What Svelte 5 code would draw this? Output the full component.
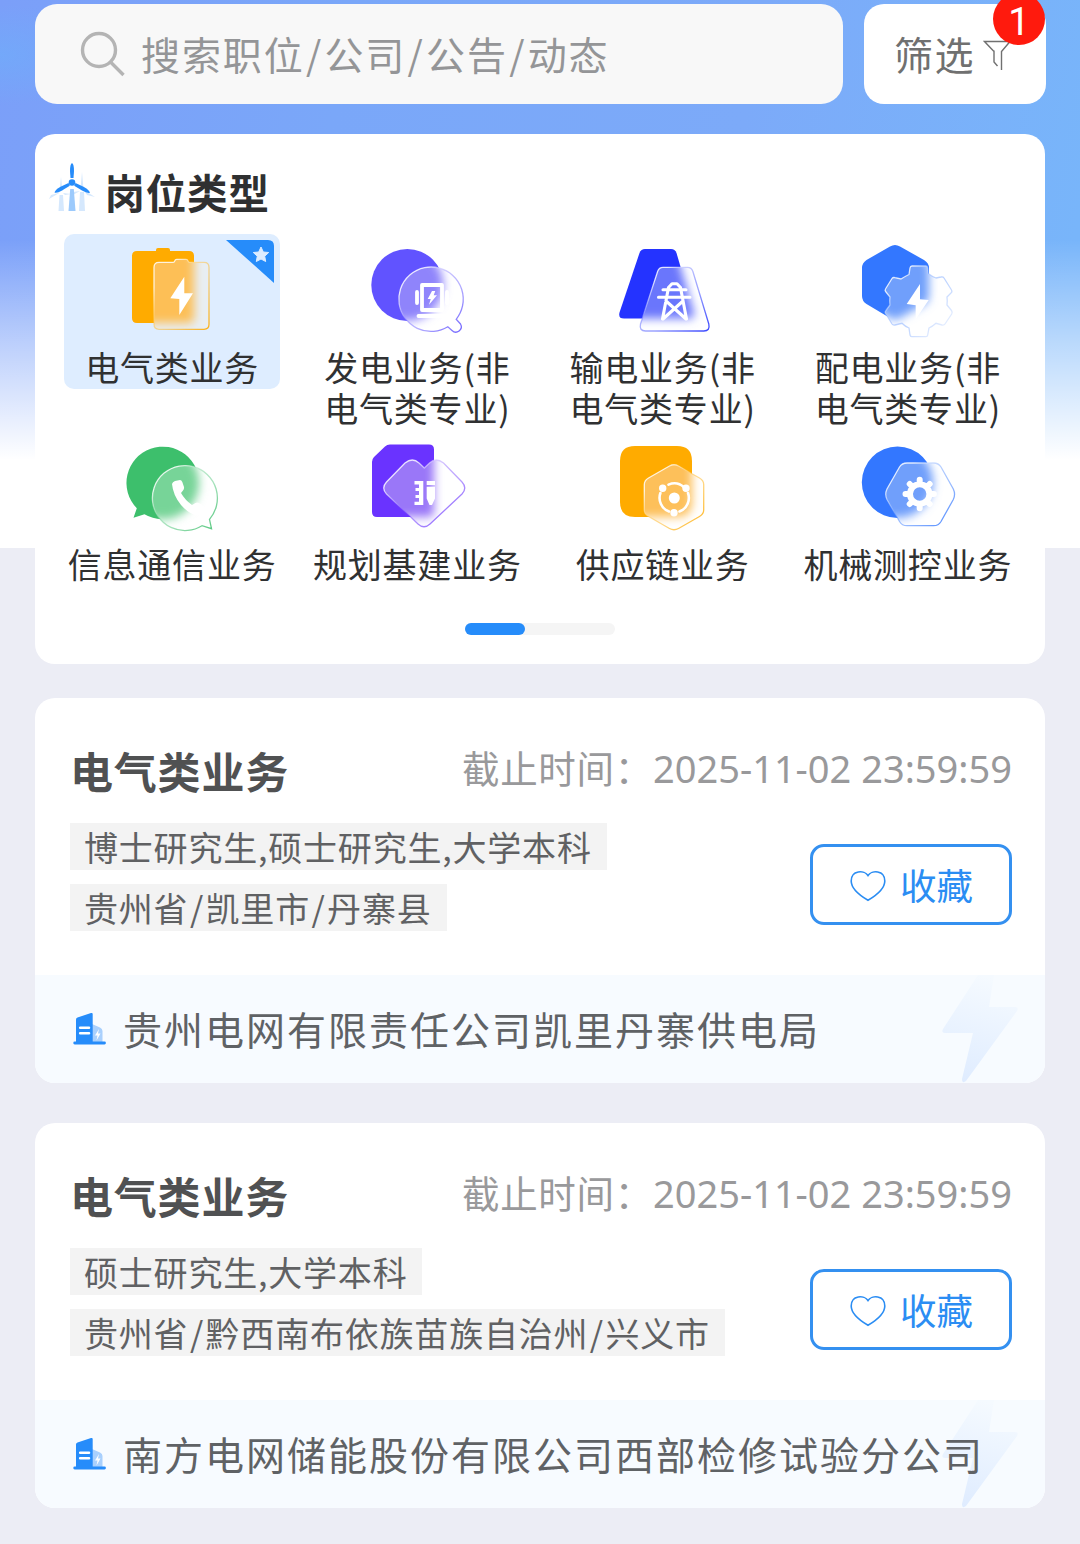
<script>
    const categories = [
        {
            label: '电气类业务',
            selected: true,
            color: '#ffab00',
            soft: '#fdbf57',
            back: 'M20 11H39V10q0-2 2-2H51q2 0 2 2V11H72q5 0 5 5V78q0 5-5 5H20q-5 0-5-5V16q0-5 5-5Z',
            front: 'M42 22.300H56q1.500 0 1.800-1.500 0.300-1.500 2-1.500H69q1.700 0 2 1.500 0.300 1.500 1.800 1.500H87q5 0 5 5V84.300q0 5-5 5H42q-5 0-5-5V27.300q0-5 5-5Z',
            fill: 'M67.300 36.700L53.300 58.300L62.300 59V75L76 53.300H67.300Z'
        },
        {
            label: '发电业务(非电气类专业)',
            color: '#6153ff',
            soft: '#8f84fb',
            back: 'M45.300 9a36 36 0 1 1 0 72a36 36 0 1 1 0-72Z',
            front: 'M94.200 79.300L98.500 84a5.400 5.400 0 0 1-8.500 6.500L85.800 86.700A32.200 32.200 0 1 1 94.200 79.300Z',
            fill: 'M70 51L65.700 59H68.700L67 64.700L75 55.300H71.700L73.300 51Z',
            stroke: 'M60 45H80V70H60ZM55 52V63M85 52V63M56.500 76H84',
            width: 3.8
        },
        {
            label: '输电业务(非电气类专业)',
            color: '#2433ff',
            soft: '#6b76fc',
            back: 'M37 9H63q4 0 5.500 4L86 73q1 5.500-4.500 5.500H16q-6 0-4.500-6L31.500 13q1.500-4 5.500-4Z',
            front: 'M55 27.300H79.500q4 0 5.300 4L100.800 84q1.500 7-5 7H37.500q-6.500 0-5-7L49.700 31.300q1.300-4 5.300-4Z',
            stroke: 'M54.500 79L60.500 47.500L64 43.800H69L72.500 47.500L78.500 79M55 49.700H78M50.500 57.300H82M58 61L78 79M75 61L55 79',
            width: 3.1
        },
        {
            label: '配电业务(非电气类专业)',
            color: '#3377ff',
            soft: '#6f9ffb',
            back: 'M37 6.500Q42 3.500 47 6.500L71 20Q76 23 76 28V56Q76 61 71.500 64L47 78Q42 81 37 78L13.500 64Q9 61 9 56V28Q9 23 13.500 20Z',
            front: 'M59 26H73Q74.500 26 74.700 28L75.300 33.500Q79 36.500 83 38L88 37Q90 36.500 91 38L98.500 50Q99.500 52 98 53L94 57Q94.500 61 94 65L98.500 70.500Q99.700 72 98.700 74L92 84Q91 85.500 89 85L83 83.300Q79.500 86.500 76 88L74.700 95Q74.500 96.700 73 96.700H59Q57.500 96.700 57 95L56 88Q52 86.500 49 83.300L42 85Q40 85.500 39 84L32.500 73.500Q31.500 72 33 70.500L37 65Q36.500 61 37 57L33 52Q31.500 50.500 32.500 49L39 38.500Q40 37 42 37.700L48 39Q52 36.500 56 34.500L57 28Q57.300 26 59 26Z',
            fill: 'M67 44L53.700 64L62.700 65.300V79.300L75.700 60L67 59.300Z',
            fade: true
        },
        {
            label: '信息通信业务',
            color: '#3dbf6c',
            soft: '#77d498',
            back: 'M19.800 71.300L16.500 80.700L27.500 77.300A36.300 36.300 0 1 0 19.800 71.300Z',
            front: 'M92.500 82.300L94.500 91.700L85 88.700A32.500 32.500 0 1 1 92.500 82.300Z',
            fill: 'M55 47Q55.500 45 58 44L63 43Q64.500 43 65.300 45L67 50Q67.300 52 66 53.500L64 56Q68 63 75 68L78.500 66Q80 65 82 66L87 69Q88 70 87.500 72L85 77Q84 79 80 78.500Q72 77 64 68Q56 58 55 47Z'
        },
        {
            label: '规划基建业务',
            color: '#6a33ff',
            soft: '#9a77f8',
            back: 'M28 7.500H67q5 0 5 5V75q0 5-5 5H15q-5 0-5-5V25Q10 22 12 20L23 9.500Q25 7.500 28 7.500Z',
            front: 'M43 26Q50.500 20 57 26L62.300 31L67.600 26Q74 20 81.500 26L100 45Q105.500 51 100 57L68 87Q62 92.500 56 87L24.500 57Q19 51 24.500 45Z',
            fill: 'M52.500 44H61.300V68H52.500V64.700H57V61H53.500V58H57V54H53.500V51H57V47.500H52.500ZM64.700 44H73V48H64.700ZM64.700 49.700H73V61.500L70 68H67.500L64.700 61.500Z'
        },
        {
            label: '供应链业务',
            color: '#ffab00',
            soft: '#fdc05a',
            back: 'M27 9H69q15 0 15 15V65q0 15-15 15H27q-15 0-15-15V24q0-15 15-15Z',
            front: 'M61.500 29Q66 26.500 70.500 29L91.500 41Q95.700 43.500 95.700 47.500V73Q95.700 77 91.500 79.500L70.500 91.500Q66 94 61.500 91.500L40.500 79.500Q36.300 77 36.300 73V47.500Q36.300 43.500 40.500 41Z',
            fill: 'M60.800 61a5.500 5.500 0 1 1 11 0a5.500 5.500 0 1 1-11 0ZM51 51.300a3.700 3.700 0 1 1 7.400 0a3.700 3.700 0 1 1-7.400 0ZM74.300 51.300a3.700 3.700 0 1 1 7.400 0a3.700 3.700 0 1 1-7.400 0ZM62.300 75.700a3.700 3.700 0 1 1 7.400 0a3.700 3.700 0 1 1-7.400 0Z',
            stroke: 'M60.500 47.600A14.600 14.600 0 0 1 76 50.200M52.400 56A14.600 14.600 0 0 0 61 74.500M80 56A14.600 14.600 0 0 1 71.500 74.500',
            width: 2.6
        },
        {
            label: '机械测控业务',
            color: '#3377ff',
            soft: '#6f9ffb',
            back: 'M44.500 9.600a35.700 35.700 0 1 1 0 71.400a35.700 35.700 0 1 1 0-71.400Z',
            front: 'M54 26H80.500Q85.500 26 88 30L100.300 52Q102.800 57.300 100.300 62.500L88 84.500Q85.500 88.700 80.500 88.700H54Q49 88.700 46.500 84.500L34 62.500Q31.500 57.300 34 52L46.500 30Q49 26 54 26Z',
            stroke: 'M57 57a9.700 9.700 0 1 1 19.400 0a9.700 9.700 0 1 1-19.400 0ZM66.700 42.800v3M66.700 68.200v3M52.500 57h3M77.900 57h3M56.700 47l2 2M76.700 47l-2 2M56.700 67l2-2M76.700 67l-2-2',
            width: 6
        }
    ];

    const jobs = [
        {
            title: '电气类业务',
            deadline: '2025-11-02 23:59:59',
            tags: ['博士研究生,硕士研究生,大学本科', '贵州省/凯里市/丹寨县'],
            company: '贵州电网有限责任公司凯里丹寨供电局'
        },
        {
            title: '电气类业务',
            deadline: '2025-11-02 23:59:59',
            tags: ['硕士研究生,大学本科', '贵州省/黔西南布依族苗族自治州/兴义市'],
            company: '南方电网储能股份有限公司西部检修试验分公司'
        }
    ];
</script>

{#snippet slashed(text)}
    {#each text.split('/') as part, n}{#if n}<i class="slash">/</i>{/if}{part}{/each}
{/snippet}

<div class="page">
    <div class="search-row">
        <div class="search-box">
            <svg class="search-icon" viewBox="0 0 46 46">
                <circle cx="19" cy="19" r="16.500" />
                <path d="M30.500 31L43.500 44" />
            </svg>
            <span>{@render slashed('搜索职位/公司/公告/动态')}</span>
        </div>
        <div class="filter-box">
            <span>筛选</span>
            <svg class="filter-icon" viewBox="0 0 28 32">
                <path d="M11 10.500V22L14.500 26M11 11.500L1.500 1.500H27L18.500 11.500V30" />
            </svg>
            <b class="badge">1</b>
        </div>
    </div>

    <section class="types">
        <h2>
            <svg class="turbine" viewBox="0 0 48 50">
                <g fill="#d5e8fd">
                    <path d="M10.500 32H14L15 48H9.500Z" />
                    <path d="M31 29H35L36 48H30Z" />
                    <path d="M12 14l1.500 14h-3zM11 29.500L0 36l2-4zM14 30l8 1-6 1zM33 9l1.500 17h-3zM35 27l11 7-8-2zM31 28l-9 5 2-4z" />
                </g>
                <path fill="#9ccafc" d="M21.200 26H24.800L26.500 48H19.500Z" />
                <g fill="#268cfa">
                    <circle cx="23" cy="19.500" r="3.300" />
                    <path d="M23 0Q25 1 25 8L24.500 15H21.500L21 8Q21 1 23 0Z" />
                    <path d="M19.500 20L20.800 22.700L13 27.500Q8 30.500 5.500 29.500Q6 27 11.500 23.800Z" />
                    <path d="M26.500 20L25.200 22.700L33 27.500Q38 30.500 41 29.800Q40 27 34.500 23.800Z" />
                </g>
            </svg>
            岗位类型
        </h2>
        <div class="grid">
            {#each categories as item, i}
                <div class="cell" class:selected={item.selected}>
                    {#if item.selected}
                        <svg class="corner" viewBox="0 0 50 44">
                            <path fill="#268cfa" d="M1 0H43Q49 0 49 6V43Z" />
                            <path fill="#dcecff" stroke="#dcecff" stroke-linejoin="round" d="M36 7L38.300 12L43.700 12.500L39.700 16.200L40.700 21.500L36 19L31.300 21.500L32.300 16.200L28.300 12.500L33.700 12Z" />
                        </svg>
                    {/if}
                    <svg class="cell-icon" viewBox="0 0 110 100">
                        <defs>
                            <clipPath id="clip{i}"><path d={item.front} /></clipPath>
                            <filter id="soft{i}" x="-20%" y="-20%" width="140%" height="140%">
                                <feGaussianBlur stdDeviation="5" />
                            </filter>
                            <linearGradient id="edge{i}" x1="0" y1="0" x2="1" y2="1">
                                <stop offset="0.200" stop-color="#fff" stop-opacity="0.800" />
                                <stop offset="0.600" stop-color={item.color} stop-opacity={item.fade ? 0.3 : 0.45} />
                                <stop offset="1" stop-color={item.color} stop-opacity={item.fade ? 0.05 : 0.9} />
                            </linearGradient>
                        </defs>
                        <path d={item.back} fill={item.color} />
                        <g clip-path="url(#clip{i})">
                            <path d={item.front} fill={item.selected ? '#e8eef3' : '#fff'} />
                            <path d={item.back} fill={item.soft} filter="url(#soft{i})" />
                        </g>
                        <path d={item.front} fill="none" stroke="url(#edge{i})" stroke-width="1.300" />
                        {#if item.fill}
                            <path d={item.fill} fill="#fff" />
                        {/if}
                        {#if item.stroke}
                            <path d={item.stroke} fill="none" stroke="#fff" stroke-width={item.width} stroke-linecap="round" stroke-linejoin="round" />
                        {/if}
                    </svg>
                    <p>{item.label}</p>
                </div>
            {/each}
        </div>
        <div class="pager"><i></i></div>
    </section>

    {#each jobs as job, i}
        <article class="job">
            <div class="job-head">
                <h3>{job.title}</h3>
                <span class="deadline">截止时间：<em>{job.deadline}</em></span>
            </div>
            <div class="job-body">
                <div class="tags">
                    {#each job.tags as tag}
                        <span>{@render slashed(tag)}</span>
                    {/each}
                </div>
                <button>
                    <svg class="heart" viewBox="0 0 36 32">
                        <path d="M18 5.500C14.500 0 1.200-0.300 1.200 11C1.200 18.500 9 25 18 30.300C27 25 34.800 18.500 34.800 11C34.800-0.300 21.500 0 18 5.500Z" />
                    </svg>
                    收藏
                </button>
            </div>
            <div class="job-foot">
                <svg class="bolt" viewBox="0 0 80 108">
                    <defs>
                        <linearGradient id="bolt{i}" x1="0.500" y1="0" x2="0.300" y2="1">
                            <stop offset="0" stop-color="#f5faff" />
                            <stop offset="1" stop-color="#dfecff" />
                        </linearGradient>
                    </defs>
                    <path fill="url(#bolt{i})" d="M38 0H54L49 32H75Q79 32 77 36L26 106Q22 109 22 104L33 58H5Q1 58 3 54Z" />
                </svg>
                <svg class="building" viewBox="0 0 34 34">
                    <path fill="#a9d0fd" d="M19 12L27 15.500Q29.500 16.500 29.500 19V31H19Z" />
                    <path fill="#fff" d="M26 17L22 23.500H24.500L23.500 28.500L27.500 21.500H25Z" />
                    <path fill="#268cfa" d="M3 7.500Q3 6 4.500 5.400L18 1Q19.700 0.500 19.700 2V30H3Z" />
                    <path fill="none" stroke="#268cfa" stroke-width="2.800" stroke-linecap="round" d="M1.700 31H31.500" />
                    <path fill="none" stroke="#fff" stroke-width="2.600" stroke-linecap="round" d="M7.200 15.700H16M7.200 21.200H16" />
                </svg>
                <span>{job.company}</span>
            </div>
        </article>
    {/each}
</div>

<style>
    :global(body) {
        background: #ecedf5;
    }

    .page {
        box-sizing: border-box;
        height: 1544px;
        padding: 4px 35px 0;
        overflow: hidden;
        font-family: 'Noto Sans CJK SC', 'Noto Sans', sans-serif;
        background:
            linear-gradient(180deg, rgba(255, 255, 255, 0) 240px, rgba(255, 255, 255, 0.5) 345px, #fff 460px) 0 0 / 100% 548px no-repeat,
            radial-gradient(ellipse 110px 50px at 0 55px, rgba(112, 172, 250, 0.7), rgba(112, 172, 250, 0)) 0 0 / 100% 548px no-repeat,
            linear-gradient(100deg, #7b9ff9 0%, #7aa7f9 30%, #7caaf9 65%, #78b5fa 95%) 0 0 / 100% 548px no-repeat,
            #ecedf5;
    }

    .slash {
        margin: 0 1.3px;
        font-style: normal;
    }

    .search-row {
        display: flex;
        gap: 21px;
        height: 100px;
        margin-right: -1px;
    }

    .search-box {
        box-sizing: border-box;
        display: flex;
        align-items: center;
        width: 808px;
        padding-left: 45px;
        border-radius: 22px;
        background: #f8f8f8;
        color: #949597;
        font-size: 39px;
        letter-spacing: 1.9px;
    }

    .search-box span,
    .filter-box span {
        margin-top: -2px;
    }

    .search-icon {
        width: 46px;
        height: 46px;
        margin-right: 15px;
        fill: none;
        stroke: #b4b4b4;
        stroke-width: 3.4;
    }

    .filter-box {
        position: relative;
        box-sizing: border-box;
        display: flex;
        align-items: center;
        width: 182px;
        padding-left: 30px;
        border-radius: 20px;
        background: #fff;
        color: #707070;
        font-size: 39px;
        letter-spacing: 1.5px;
    }

    .filter-icon {
        width: 28px;
        height: 32px;
        margin: 3px 0 0 8px;
        fill: none;
        stroke: #707070;
        stroke-width: 1.4;
    }

    .badge {
        position: absolute;
        top: -11px;
        right: 1px;
        box-sizing: border-box;
        width: 52px;
        height: 52px;
        padding-top: 11px;
        border-radius: 50%;
        background: #ff1a0d;
        color: #fff;
        font: 400 38px/36px Roboto, sans-serif;
        letter-spacing: 0;
        text-align: center;
    }

    .types {
        box-sizing: border-box;
        height: 530px;
        margin-top: 30px;
        padding: 29px 14.5px 0;
        border-radius: 20px;
        background: #fff;
    }

    h2 {
        display: flex;
        align-items: center;
        height: 57px;
        margin: 0;
        color: #2f3031;
        font-size: 40.5px;
        font-weight: 700;
        letter-spacing: 0.8px;
    }

    .turbine {
        align-self: flex-start;
        width: 48px;
        height: 50px;
        margin: 0 8px 0 -1px;
    }

    .grid {
        display: grid;
        grid-template-columns: repeat(4, 1fr);
        grid-auto-rows: 197px;
        justify-items: center;
        align-items: start;
        margin-top: 14px;
    }

    .cell {
        position: relative;
        display: flex;
        flex-direction: column;
        align-items: center;
        width: 216px;
        height: 155px;
        border-radius: 10px;
    }

    .cell.selected {
        background: #deedff;
    }

    .corner {
        position: absolute;
        top: 6px;
        right: 5px;
        width: 50px;
        height: 44px;
    }

    .cell-icon {
        flex: none;
        width: 110px;
        height: 100px;
        margin-top: 6px;
    }

    .cell p {
        width: 213px;
        margin: 6px 0 0;
        color: #303132;
        font-size: 34px;
        line-height: 41px;
        letter-spacing: 0.8px;
        text-align: center;
    }

    .pager {
        width: 150px;
        height: 12px;
        margin: -5px auto 0;
        border-radius: 6px;
        background: #f5f5f5;
    }

    .pager i {
        display: block;
        width: 60px;
        height: 12px;
        border-radius: 6px;
        background: #268cfa;
    }

    .job {
        display: flex;
        flex-direction: column;
        height: 385px;
        margin-top: 40px;
        border-radius: 20px;
        background: #fff;
        overflow: hidden;
    }

    .types + .job {
        margin-top: 34px;
    }

    .job-head {
        display: flex;
        align-items: center;
        justify-content: space-between;
        height: 60px;
        padding: 43px 33px 0 35px;
    }

    h3 {
        margin: -2px 0 0;
        color: #505152;
        font-size: 43px;
        font-weight: 700;
        letter-spacing: 0.8px;
    }

    .deadline {
        margin-top: -10px;
        color: #99999b;
        font-size: 37.5px;
        letter-spacing: 0.7px;
        white-space: nowrap;
    }

    .deadline em {
        font-family: 'Noto Sans', sans-serif;
        font-size: 38px;
        font-style: normal;
        letter-spacing: 0;
    }

    .job-body {
        display: flex;
        align-items: flex-start;
        justify-content: space-between;
        flex: 1;
        padding: 22px 33px 0 35px;
    }

    .tags {
        display: flex;
        flex-direction: column;
        align-items: flex-start;
        gap: 14px;
    }

    .tags span {
        padding: 0 15px 0 14px;
        background: #f3f3f3;
        color: #606163;
        font-size: 34px;
        line-height: 47px;
        letter-spacing: 0.8px;
        white-space: nowrap;
    }

    .tags .slash {
        margin: 0 1.5px;
    }

    button {
        box-sizing: border-box;
        display: flex;
        align-items: center;
        justify-content: center;
        width: 202px;
        height: 81px;
        margin-top: 21px;
        padding: 0;
        border: 3px solid #3490f0;
        border-radius: 14px;
        background: #fff;
        color: #2b8df3;
        font-family: inherit;
        font-size: 36.5px;
    }

    .heart {
        width: 36px;
        height: 32px;
        margin: 2px 14px 0 1px;
        fill: none;
        stroke: #2b8df3;
        stroke-width: 1.6;
    }

    .job-foot {
        position: relative;
        display: flex;
        align-items: center;
        height: 108px;
        padding-left: 38px;
        background: #f7fbff;
        color: #5f6265;
        font-size: 39px;
        letter-spacing: 2px;
        white-space: nowrap;
    }

    .bolt {
        position: absolute;
        top: 0;
        right: 25px;
        width: 80px;
        height: 108px;
    }

    .building {
        width: 34px;
        height: 34px;
        margin-right: 16px;
    }

    .job-foot span {
        position: relative;
        margin-top: -2px;
    }
</style>
